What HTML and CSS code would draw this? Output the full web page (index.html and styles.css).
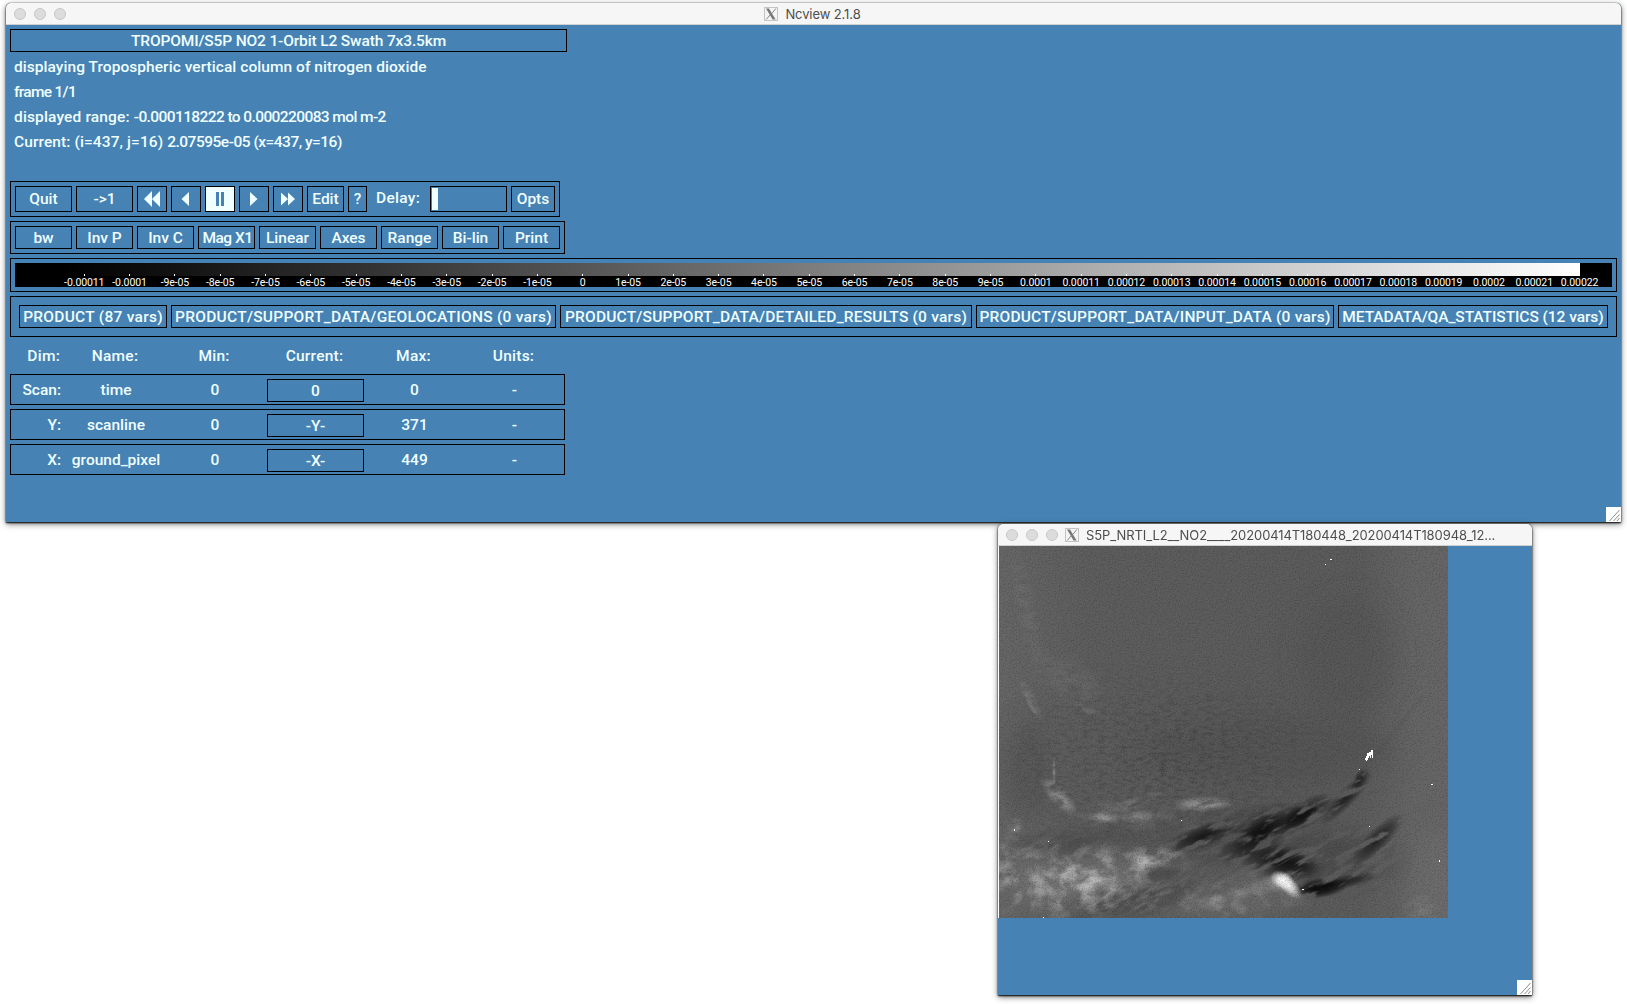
FILE: index.html
```html
<!DOCTYPE html>
<html lang="en">
<head>
<meta charset="utf-8">
<title>Ncview 2.1.8</title>
<link rel="stylesheet" href="styles.css">
</head>
<body>
<svg width="0" height="0" class="defs"><defs>
<symbol id="xlogo" viewBox="0 0 14 14"><rect x=".5" y=".5" width="13" height="13" fill="#f4f4f4" stroke="#c4c4c4"/><path d="M2 1.500h3l6.600 11H8.600z" fill="#777"/><path d="M11.800 1.500 7.800 6.500M6.200 7.800 2.200 12.500" stroke="#888" stroke-width="1"/></symbol>
<symbol id="grip" viewBox="0 0 15 15"><path d="M0 0h15v15H0z" fill="#fff"/><path d="M3.500 14 13.500 3M7.500 14l6-6.500M11 14l2.500-3" stroke="#8a8a8a" fill="none"/></symbol>
</defs></svg>

<main class="window main-window">
  <header class="titlebar">
    <div class="lights"><i></i><i></i><i></i></div>
    <svg class="xicon"><use href="#xlogo"/></svg><span class="caption">Ncview 2.1.8</span>
  </header>
  <div class="client">
    <div class="dataset"><span class="t1">TROPOMI/S5P NO2 1-Orbit L2 Swath 7x3.5km</span></div>
    <div class="info">
      <p><span class="t2">displaying Tropospheric vertical column of nitrogen dioxide</span></p>
      <p><span class="t3">frame 1/1</span></p>
      <p><span class="t4">displayed range: <b>-0.000118222 to 0.000220083 mol m-2</b></span></p>
      <p><span class="t5">Current: (i=437, j=16) <b>2.07595e-05 (x=437, y=16)</b></span></p>
    </div>
    <div class="panel transport">
      <button class="w57"><span>Quit</span></button><button class="w57"><span>-&gt;1</span></button>
      <button class="w30"><svg viewBox="0 0 18 16"><path d="M9 0v16L1 8zM17 0v16L9 8z"/></svg></button>
      <button class="w30"><svg viewBox="0 0 18 16"><path d="M12 1v14L4.500 8z"/></svg></button>
      <button class="w30 active"><svg viewBox="0 0 18 16"><path d="M5 1h3v14H5zM10 1h3v14h-3z"/></svg></button>
      <button class="w30"><svg viewBox="0 0 18 16"><path d="M5 1v14l7.500-7z"/></svg></button>
      <button class="w30"><svg viewBox="0 0 18 16"><path d="M2 1.500v13L9 8zM9 1.500v13L16 8z"/></svg></button>
      <button class="w37"><span>Edit</span></button><button class="w19"><span>?</span></button>
      <span class="delay">Delay:</span><div class="slider"><i></i></div>
      <button class="w44"><span>Opts</span></button>
    </div>
    <div class="panel options">
      <button class="w57"><span>bw</span></button><button class="w57"><span>Inv P</span></button><button class="w57"><span>Inv C</span></button><button class="w57 tight"><span>Mag X1</span></button><button class="w57"><span>Linear</span></button><button class="w57"><span>Axes</span></button><button class="w57"><span>Range</span></button><button class="w57"><span>Bi-lin</span></button><button class="w57"><span>Print</span></button>
    </div>
    <div class="panel colorbar">
      <div class="scale"><div class="ramp"></div>
      <div class="ticks"><span>-0.00011</span><span>-0.0001</span><span>-9e-05</span><span>-8e-05</span><span>-7e-05</span><span>-6e-05</span><span>-5e-05</span><span>-4e-05</span><span>-3e-05</span><span>-2e-05</span><span>-1e-05</span><span>0</span><span>1e-05</span><span>2e-05</span><span>3e-05</span><span>4e-05</span><span>5e-05</span><span>6e-05</span><span>7e-05</span><span>8e-05</span><span>9e-05</span><span>0.0001</span><span>0.00011</span><span>0.00012</span><span>0.00013</span><span>0.00014</span><span>0.00015</span><span>0.00016</span><span>0.00017</span><span>0.00018</span><span>0.00019</span><span>0.0002</span><span>0.00021</span><span>0.00022</span></div></div>
    </div>
    <div class="panel groups">
      <button class="g1"><span>PRODUCT (87 vars)</span></button><button class="g2"><span>PRODUCT/SUPPORT_DATA/GEOLOCATIONS (0 vars)</span></button><button class="g3"><span>PRODUCT/SUPPORT_DATA/DETAILED_RESULTS (0 vars)</span></button><button class="g4"><span>PRODUCT/SUPPORT_DATA/INPUT_DATA (0 vars)</span></button><button class="g5"><span>METADATA/QA_STATISTICS (12 vars)</span></button>
    </div>
    <div class="dims">
      <div class="dim head"><span>Dim:</span><span>Name:</span><span>Min:</span><span>Current:</span><span>Max:</span><span>Units:</span></div>
      <div class="dim"><span>Scan:</span><span>time</span><span>0</span><button>0</button><span>0</span><span>-</span></div>
      <div class="dim"><span>Y:</span><span>scanline</span><span>0</span><button>-Y-</button><span>371</span><span>-</span></div>
      <div class="dim"><span>X:</span><span>ground_pixel</span><span>0</span><button>-X-</button><span>449</span><span>-</span></div>
    </div>
  </div>
  <svg class="grip"><use href="#grip"/></svg>
</main>

<section class="window plot-window">
  <header class="titlebar">
    <div class="lights"><i></i><i></i><i></i></div>
    <svg class="xicon"><use href="#xlogo"/></svg><span class="caption">S5P_NRTI_L2__NO2____20200414T180448_20200414T180948_12...</span>
  </header>
  <svg class="swath" viewBox="0 0 450 372" width="450" height="372">
    <defs>
      <filter id="streak" filterUnits="userSpaceOnUse" x="-250" y="-50" width="800" height="700"><feTurbulence type="fractalNoise" baseFrequency=".035 .15" numOctaves="5" seed="5"/><feColorMatrix values="0 0 0 0 0  0 0 0 0 0  0 0 0 0 0  0 6 0 0 -2.100"/><feComposite in2="SourceGraphic" operator="in"/></filter>
      <filter id="wisp" filterUnits="userSpaceOnUse" x="0" y="0" width="450" height="372"><feTurbulence type="fractalNoise" baseFrequency=".06 .12" numOctaves="5" seed="14"/><feColorMatrix values="0 0 0 0 .6  0 0 0 0 .6  0 0 0 0 .6  3 0 0 0 -.8"/><feComposite in2="SourceGraphic" operator="in"/></filter>
      <filter id="soft" x="-50%" y="-50%" width="200%" height="200%"><feGaussianBlur stdDeviation="12"/></filter>
      <filter id="lit" filterUnits="userSpaceOnUse" x="0" y="0" width="450" height="372"><feTurbulence type="fractalNoise" baseFrequency=".06 .08" numOctaves="6" seed="9"/><feColorMatrix values="0 0 0 0 .65  0 0 0 0 .65  0 0 0 0 .65  3 0 0 0 -1.200"/><feComposite in2="SourceGraphic" operator="in"/></filter>
      <filter id="grain" x="0" y="0" width="100%" height="100%"><feTurbulence type="fractalNoise" baseFrequency=".7" numOctaves="2" seed="2"/><feColorMatrix values="0 0 0 0 0  0 0 0 0 0  0 0 0 0 0  2 0 0 0 -.85"/></filter>
      <filter id="ripple" filterUnits="userSpaceOnUse" x="0" y="0" width="450" height="372"><feTurbulence type="fractalNoise" baseFrequency=".13 .3" numOctaves="3" seed="7"/><feColorMatrix values="0 0 0 0 0  0 0 0 0 0  0 0 0 0 0  0 2.500 0 0 -1.050"/><feComposite in2="SourceGraphic" operator="in"/></filter>
      <radialGradient id="fade"><stop offset="0" stop-color="#fff"/><stop offset=".5" stop-color="#fff" stop-opacity=".6"/><stop offset="1" stop-color="#fff" stop-opacity="0"/></radialGradient>
      <linearGradient id="base" x2="1"><stop offset="0" stop-color="#676767"/><stop offset=".2" stop-color="#5e5e5e"/><stop offset=".8" stop-color="#5c5c5c"/><stop offset=".92" stop-color="#666"/><stop offset="1" stop-color="#676767"/></linearGradient>
    </defs>
    <rect width="450" height="372" fill="url(#base)"/>
    <g filter="url(#soft)">
      <ellipse cx="350" cy="110" rx="50" ry="60" fill="#505050" opacity=".35"/><ellipse cx="270" cy="205" rx="130" ry="35" fill="#4d4d4d" opacity=".4"/>
      <ellipse cx="30" cy="225" rx="25" ry="50" fill="#4a4a4a" opacity=".4"/><ellipse cx="110" cy="290" rx="40" ry="13" fill="#444" opacity=".4"/>
      <ellipse cx="440" cy="340" rx="25" ry="60" fill="#747474" opacity=".5"/><ellipse cx="90" cy="335" rx="80" ry="22" fill="#888" opacity=".5"/>
      <ellipse cx="225" cy="348" rx="70" ry="22" fill="#777" opacity=".5"/>
      <ellipse cx="255" cy="298" rx="35" ry="20" fill="#333" opacity=".25"/>
    </g>
    <g opacity=".18" filter="url(#ripple)"><ellipse cx="160" cy="215" rx="200" ry="110" fill="url(#fade)"/></g>
    <g opacity=".7" filter="url(#lit)"><ellipse cx="85" cy="335" rx="90" ry="45" fill="url(#fade)"/><ellipse cx="90" cy="333" rx="38" ry="25" fill="url(#fade)"/><ellipse cx="10" cy="325" rx="45" ry="50" fill="url(#fade)" opacity=".5"/><ellipse cx="155" cy="314" rx="42" ry="16" fill="url(#fade)"/><ellipse cx="230" cy="350" rx="95" ry="30" fill="url(#fade)" opacity=".4"/><ellipse cx="125" cy="270" rx="60" ry="18" fill="url(#fade)" opacity=".4"/></g>
    <g filter="url(#wisp)" fill="url(#fade)">
      <ellipse cx="61" cy="250" rx="26" ry="10" transform="rotate(48 61 250)" opacity=".6"/>
      <ellipse cx="205" cy="258" rx="36" ry="8" transform="rotate(-3 205 258)" opacity=".65"/>
      <ellipse cx="105" cy="272" rx="18" ry="7" transform="rotate(10 105 272)" opacity=".5"/>
      <ellipse cx="140" cy="270" rx="24" ry="7" opacity=".35"/>
      <ellipse cx="135" cy="257" rx="38" ry="6" transform="rotate(-20 135 257)" opacity=".25"/>
      <ellipse cx="152" cy="315" rx="24" ry="8" opacity=".6"/>
      <ellipse cx="95" cy="335" rx="30" ry="14" opacity=".5"/>
      <ellipse cx="28" cy="60" rx="70" ry="12" transform="rotate(78 28 60)" opacity=".1"/>
      <ellipse cx="75" cy="135" rx="55" ry="26" transform="rotate(30 75 135)" opacity=".1"/>
      <ellipse cx="88" cy="163" rx="16" ry="4" transform="rotate(22 88 163)" opacity=".2"/>
      <ellipse cx="56" cy="225" rx="2" ry="22" opacity=".4"/>
      <ellipse cx="18" cy="280" rx="9" ry="9" opacity=".4"/>
      <ellipse cx="422" cy="362" rx="20" ry="16" opacity=".18"/>
      <ellipse cx="214" cy="356" rx="16" ry="10" opacity=".35"/>
      <ellipse cx="32" cy="152" rx="24" ry="6" transform="rotate(63 32 152)" opacity=".25"/>
    </g>
    <g opacity=".8" filter="url(#streak)" transform="rotate(-28)"><g transform="rotate(28)" fill="url(#fade)">
      <ellipse cx="205" cy="290" rx="42" ry="12" transform="rotate(-20 205 290)" opacity=".9"/>
      <ellipse cx="304" cy="269" rx="38" ry="14" transform="rotate(-30 304 269)"/>
      <ellipse cx="304" cy="269" rx="22" ry="9" transform="rotate(-30 304 269)"/>
      <ellipse cx="260" cy="287" rx="48" ry="19" transform="rotate(-35 260 287)" opacity=".8"/>
      <ellipse cx="265" cy="285" rx="26" ry="11" transform="rotate(-35 265 285)"/>
      <ellipse cx="282" cy="316" rx="48" ry="20" transform="rotate(15 282 316)" opacity=".8"/>
      <ellipse cx="290" cy="316" rx="32" ry="13" transform="rotate(15 290 316)" opacity=".8"/>
      <ellipse cx="348" cy="252" rx="38" ry="9" transform="rotate(-46 348 252)" opacity=".8"/>
      <ellipse cx="363" cy="231" rx="14" ry="6" transform="rotate(-60 363 231)" opacity=".8"/>
      <ellipse cx="380" cy="293" rx="36" ry="11" transform="rotate(-45 380 293)" opacity=".8"/>
      <ellipse cx="322" cy="342" rx="28" ry="10" transform="rotate(-8 322 342)"/>
      <ellipse cx="322" cy="342" rx="28" ry="10" transform="rotate(-8 322 342)"/>
      <ellipse cx="345" cy="336" rx="36" ry="7" transform="rotate(-12 345 336)" opacity=".8"/>
      <ellipse cx="250" cy="295" rx="120" ry="50" opacity=".2"/>
      <ellipse cx="150" cy="350" rx="95" ry="22" transform="rotate(-10 150 350)" opacity=".35"/>
      <ellipse cx="55" cy="300" rx="60" ry="18" opacity=".25"/>
      <ellipse cx="350" cy="315" rx="70" ry="40" opacity=".2"/>
    </g></g>
    <path d="M307 344 322 338 338 337 328 343z" fill="#0c0c0c" opacity=".75" class="haze"/>
    <path d="M148 327 163 322 183 324 172 333 155 337z" fill="#4c4c4c" opacity=".8" class="haze"/>
    <path d="M28 147Q31 158 38 168" fill="none" stroke="#999" stroke-width="2" opacity=".45" class="haze"/>
    <g fill="url(#fade)"><ellipse cx="284" cy="334" rx="13" ry="9" transform="rotate(25 284 334)"/><ellipse cx="291" cy="340" rx="17" ry="8" transform="rotate(45 291 340)" opacity=".9"/><ellipse cx="280" cy="337" rx="20" ry="10" opacity=".3"/></g>
    <path d="M75 374Q150 352 184 330T235 308M180 362 224 338M330 328 358 307M378 208Q398 185 425 150" stroke="#444" fill="none" opacity=".45" class="haze"/>
    <rect width="450" height="372" filter="url(#grain)" opacity=".22"/>
    <path d="M373 204h2v8h-1v-3h-1v3h-1v-2h-1v2h-1v2h-1v1h-1v-1h-1v-2h1v-2h1v-3h2v-1h2zM332 13h2v1h-2zM327 18h1v1h-1zM433 238h2v1h-2zM441 314h1v2h-1zM371 280h1v1h-1zM183 274h1v1h-1zM50 295h1v1h-1zM16 283h1v2h-1zM304 343h2v1h-2zM45 371h1v1h-1zM361 223h1v1h-1zM0 0h1v372H0z" fill="#fff"/>
  </svg>
  <svg class="grip"><use href="#grip"/></svg>
</section>
</body>
</html>
```
FILE: styles.css
```css
* { box-sizing: border-box; }
html, body { margin: 0; width: 1627px; height: 1004px; overflow: hidden; background: #fff; }
body { position: relative; font: 500 15.5px/20px Roboto, "Liberation Sans", sans-serif; color: #f0ffff; }
.defs { position: absolute; }
.window { position: absolute; background: #4682b4; border-radius: 5px 5px 0 0; box-shadow: 0 0 1px #333, 0 1px 2px #000, 0 2px 6px rgba(0,0,0,.55); }
.main-window { left: 6px; top: 3px; width: 1615px; height: 519px; }
.plot-window { left: 998px; top: 524px; width: 534px; height: 471px; }
.titlebar { position: relative; display: flex; align-items: center; justify-content: center; gap: 7px; height: 22px; background: #f6f6f6; border-bottom: 1px solid #d0d0d0; border-radius: 5px 5px 0 0; color: #4d4d4d; font: 400 13px/20px Inter, sans-serif; letter-spacing: -.1px; }
.main-window .titlebar { padding-right: 2px; }
.lights { position: absolute; left: 8px; top: 5px; display: flex; gap: 8px; }
.lights i { width: 12px; height: 12px; border-radius: 50%; background: #dcdcdc; border: 1px solid #c8c8c8; }
.xicon { width: 14px; height: 14px; }
.plot-window .titlebar { justify-content: flex-start; padding-left: 67px; }
.grip { position: absolute; right: 0; bottom: 0; width: 15px; height: 15px; }
.swath { display: block; }
.haze { filter: blur(.8px); }
span { white-space: pre; }
b { font-weight: inherit; }

.client { padding: 4px 4px 0; }
.dataset { width: 557px; height: 23px; border: 1px solid #000; text-align: center; line-height: 22px; }
.info { padding: 4px 0 0 4px; height: 129px; }
.info p { margin: 0; height: 25px; line-height: 23px; }
.t1 { letter-spacing: -.14px; }
.t2 { letter-spacing: .05px; }
.t3 { letter-spacing: -.7px; }
.t4 { letter-spacing: .15px; }
.t4 b { letter-spacing: -.6px; }
.t5 { letter-spacing: .1px; }
.t5 b { letter-spacing: -.5px; }
.panel { display: flex; gap: 4px; border: 1px solid #000; padding: 4px; margin-bottom: 4px; }
button { display: flex; flex: none; align-items: center; justify-content: center; padding: 0; border: 1px solid #000; background: none; color: inherit; font: inherit; white-space: pre; }
.transport { width: 550px; height: 36px; }
.options { width: 555px; height: 33px; }
.options button { padding-top: 1px; }
.colorbar { width: 1607px; height: 34px; }
.groups { width: 1607px; height: 41px; padding: 8px; margin-bottom: 0; }
.groups button { padding-top: 1px; }
.w57 { width: 57px; } .w30 { width: 30px; } .w37 { width: 37px; } .w19 { width: 19px; } .w44 { width: 44px; }
.tight { letter-spacing: -.5px; padding-left: 2px; }
.transport svg { width: 18px; height: 16px; fill: #f0ffff; }
.active { background: #f0ffff; }
.transport .active svg { fill: #4682b4; }
.delay { flex: none; width: 55px; padding-left: 5px; line-height: 25px; letter-spacing: .3px; }
.slider { flex: none; width: 77px; border: 1px solid #000; padding: 1px; }
.slider i { display: block; width: 6px; height: 22px; background: #f0ffff; }
.scale { width: 1597px; height: 24px; background: #000; }
.ramp { width: 1565px; height: 13px; background: linear-gradient(90deg, #000, #000 3%, #555 36%, #fff); }
.ticks { display: flex; margin-top: -2px; padding-left: 46.600px; color: #fff; font: 400 10.5px/13px Roboto, sans-serif; letter-spacing: -.1px; }
.ticks span { flex: none; width: 45.320px; text-align: center; }
.ticks span::before { content: ""; display: block; width: 1px; height: 2px; margin: 0 auto; background: #fff; }
.g1 { width: 148px; } .g2 { width: 385px; } .g3 { width: 412px; } .g4 { width: 358px; } .g5 { width: 270px; }
.g1, .g2 { letter-spacing: .27px; }
.g3, .g4 { letter-spacing: .21px; }
.g5 { letter-spacing: -.06px; }
.dim { display: grid; grid-template-columns: 50px 110px 88px 8px 97px 101px 99px; width: 555px; height: 31px; border: 1px solid #000; margin-bottom: 4px; line-height: 31px; text-align: center; }
.dim > :first-child { text-align: right; }
.dim > :nth-child(4) { grid-column: 5; }
.dim button { height: 23px; margin-top: 4px; padding-top: 2px; }
.head { height: 37px; margin: 0 0 0 -1px; border-color: transparent; line-height: 37px; letter-spacing: .25px; }
```
